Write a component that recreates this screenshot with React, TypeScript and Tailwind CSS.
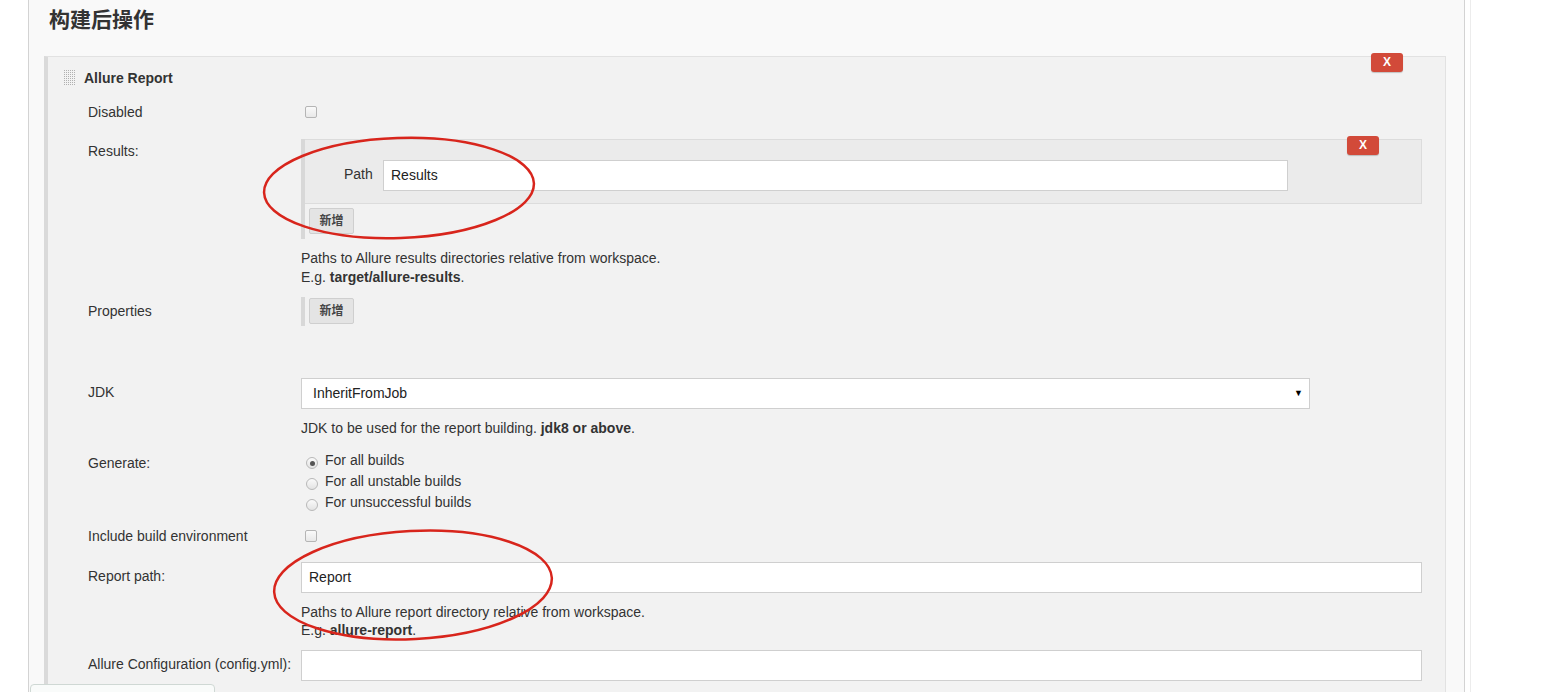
const font = "font-['Liberation_Sans','Noto_Sans_CJK_SC',sans-serif]";

function XButton({ className }: { className: string }) {
  return (
    <div
      className={`absolute w-[32px] h-[19px] rounded-[3px] bg-[#d24a39] text-white text-[12px] font-bold leading-[19px] text-center shadow-[0_1px_1px_rgba(0,0,0,0.2)] ${className}`}
    >
      X
    </div>
  );
}

function Checkbox() {
  return <div className="w-[12px] h-[12px] rounded-[2px] border border-[#b5b5b5] bg-[linear-gradient(#fafafa,#e8e8e8)]" />;
}

function Radio({ checked }: { checked?: boolean }) {
  return (
    <div className="w-[12px] h-[12px] rounded-full border border-[#b8b8b8] bg-[linear-gradient(#fafafa,#e3e3e3)] flex items-center justify-center">
      {checked && <div className="w-[5px] h-[5px] rounded-full bg-[#555]" />}
    </div>
  );
}

function AddButton() {
  return (
    <div className="ml-[4px] w-[45px] h-[26px] rounded-[2px] border border-[#cfcfcf] bg-[#e4e4e4] text-[12px] font-bold text-[#444] leading-[24px] text-center">
      新增
    </div>
  );
}

function Label({ text, pt }: { text: string; pt: string }) {
  return <div className={`w-[213px] shrink-0 text-[14px] leading-[20px] text-[#333] ${pt}`}>{text}</div>;
}

function DragHandle() {
  const dots = [];
  for (let r = 0; r < 8; r++) {
    for (let c = 0; c < 6; c++) {
      dots.push(<rect key={`${r}-${c}`} x={c * 2} y={r * 2} width="1" height="1" fill="#b0b0b0" />);
    }
  }
  return (
    <svg width="12" height="16" viewBox="0 0 12 16" className="shrink-0">
      {dots}
    </svg>
  );
}

export default function App() {
  return (
    <div className={`relative w-[1541px] h-[692px] overflow-hidden bg-white ${font}`}>
      <div className="flex h-full">
        <div className="ml-[28px] w-[1437px] h-full border-l border-r border-[#d3d3d3] bg-[#f9f9f9]">
          <h2 className="pl-[20px] pt-[6px] h-[34px] mb-[22px] text-[21px] leading-[28px] font-bold text-[#333]">构建后操作</h2>

          <section className="relative ml-[15px] w-[1402px] h-[700px] border-l-4 border-l-[#dadada] border-t border-r border-[#e2e2e2] bg-[#f2f2f2] pl-[40px] pr-[23px]">
            <XButton className="top-[-4px] right-[42px]" />

            <div className="flex items-center gap-[8px] -ml-[24px] pt-[11px] h-[31px]">
              <DragHandle />
              <span className="text-[14px] leading-[20px] font-bold text-[#333]">Allure Report</span>
            </div>

            <div className="flex mt-[14px] h-[20px] items-center">
              <Label text="Disabled" pt="" />
              <div className="ml-[4px]"><Checkbox /></div>
            </div>

            <div className="flex mt-[17px]">
              <Label text="Results:" pt="pt-[2px]" />
              <div className="flex-1">
                <div className="border-l-4 border-[#d8d8d8] pb-[5px]">
                  <div className="relative flex items-start h-[65px] pt-[20px] border-t border-r border-b border-[#dcdcdc] bg-[#ebebeb]">
                    <XButton className="top-[-4px] right-[42px]" />
                    <span className="pl-[39px] w-[78px] mt-[4px] text-[14px] leading-[20px] text-[#333]">Path</span>
                    <div className="w-[905px] h-[31px] border border-[#cfcfcf] bg-white pl-[7px] text-[14px] leading-[29px] text-[#222]">Results</div>
                  </div>
                  <div className="mt-[4px]"><AddButton /></div>
                </div>
                <div className="mt-[10px] text-[14px] leading-[19px] text-[#333]">
                  <div>Paths to Allure results directories relative from workspace.</div>
                  <div>E.g. <b>target/allure-results</b>.</div>
                </div>
              </div>
            </div>

            <div className="flex mt-[10px]">
              <Label text="Properties" pt="pt-[4px]" />
              <div className="border-l-4 border-[#d8d8d8] h-[29px] pt-[1px]">
                <AddButton />
              </div>
            </div>

            <div className="flex mt-[52px]">
              <Label text="JDK" pt="pt-[4px]" />
              <div className="flex-1">
                <div className="w-[1009px] h-[31px] border border-[#cfcfcf] bg-white flex items-center justify-between pl-[11px] pr-[6px] text-[14px] text-[#222]">
                  <span>InheritFromJob</span>
                  <span className="text-[9px] text-black">▼</span>
                </div>
                <div className="mt-[10px] text-[14px] leading-[19px] text-[#333]">
                  JDK to be used for the report building. <b>jdk8 or above</b>.
                </div>
              </div>
            </div>

            <div className="flex mt-[12px]">
              <Label text="Generate:" pt="pt-[3px]" />
              <div className="flex flex-col">
                {[
                  { t: "For all builds", c: true },
                  { t: "For all unstable builds", c: false },
                  { t: "For unsuccessful builds", c: false },
                ].map((r) => (
                  <div key={r.t} className="flex items-start h-[21px]">
                    <div className="ml-[5px] mt-[7px]"><Radio checked={r.c} /></div>
                    <span className="ml-[7px] text-[14px] leading-[21px] text-[#333]">{r.t}</span>
                  </div>
                ))}
              </div>
            </div>

            <div className="flex mt-[13px] h-[20px] items-center">
              <Label text="Include build environment" pt="" />
              <div className="ml-[4px]"><Checkbox /></div>
            </div>

            <div className="flex mt-[16px]">
              <Label text="Report path:" pt="pt-[4px]" />
              <div className="flex-1">
                <div className="h-[31px] border border-[#cfcfcf] bg-white pl-[7px] text-[14px] leading-[29px] text-[#222]">Report</div>
                <div className="mt-[10px] text-[14px] leading-[18px] text-[#333]">
                  <div>Paths to Allure report directory relative from workspace.</div>
                  <div>E.g. <b>allure-report</b>.</div>
                </div>
              </div>
            </div>

            <div className="flex mt-[11px]">
              <Label text="Allure Configuration (config.yml):" pt="pt-[4px]" />
              <div className="flex-1">
                <div className="h-[31px] border border-[#cfcfcf] bg-white" />
              </div>
            </div>
          </section>
        </div>
        <div className="ml-[5px] w-px h-full bg-[#ececec]" />
      </div>

      <svg className="absolute inset-0 pointer-events-none" width="1541" height="692">
        <ellipse cx="399" cy="188" rx="135" ry="50" transform="rotate(-2 399 188)" fill="none" stroke="#d8251c" strokeWidth="2.5" />
        <ellipse cx="413" cy="585" rx="139" ry="54" transform="rotate(-3 413 585)" fill="none" stroke="#d8251c" strokeWidth="2.5" />
      </svg>

      <div className="absolute left-[30px] top-[684px] w-[185px] h-[20px] rounded-t-[4px] border border-[#cfd8d4] bg-[#f9fbfa]" />
    </div>
  );
}
